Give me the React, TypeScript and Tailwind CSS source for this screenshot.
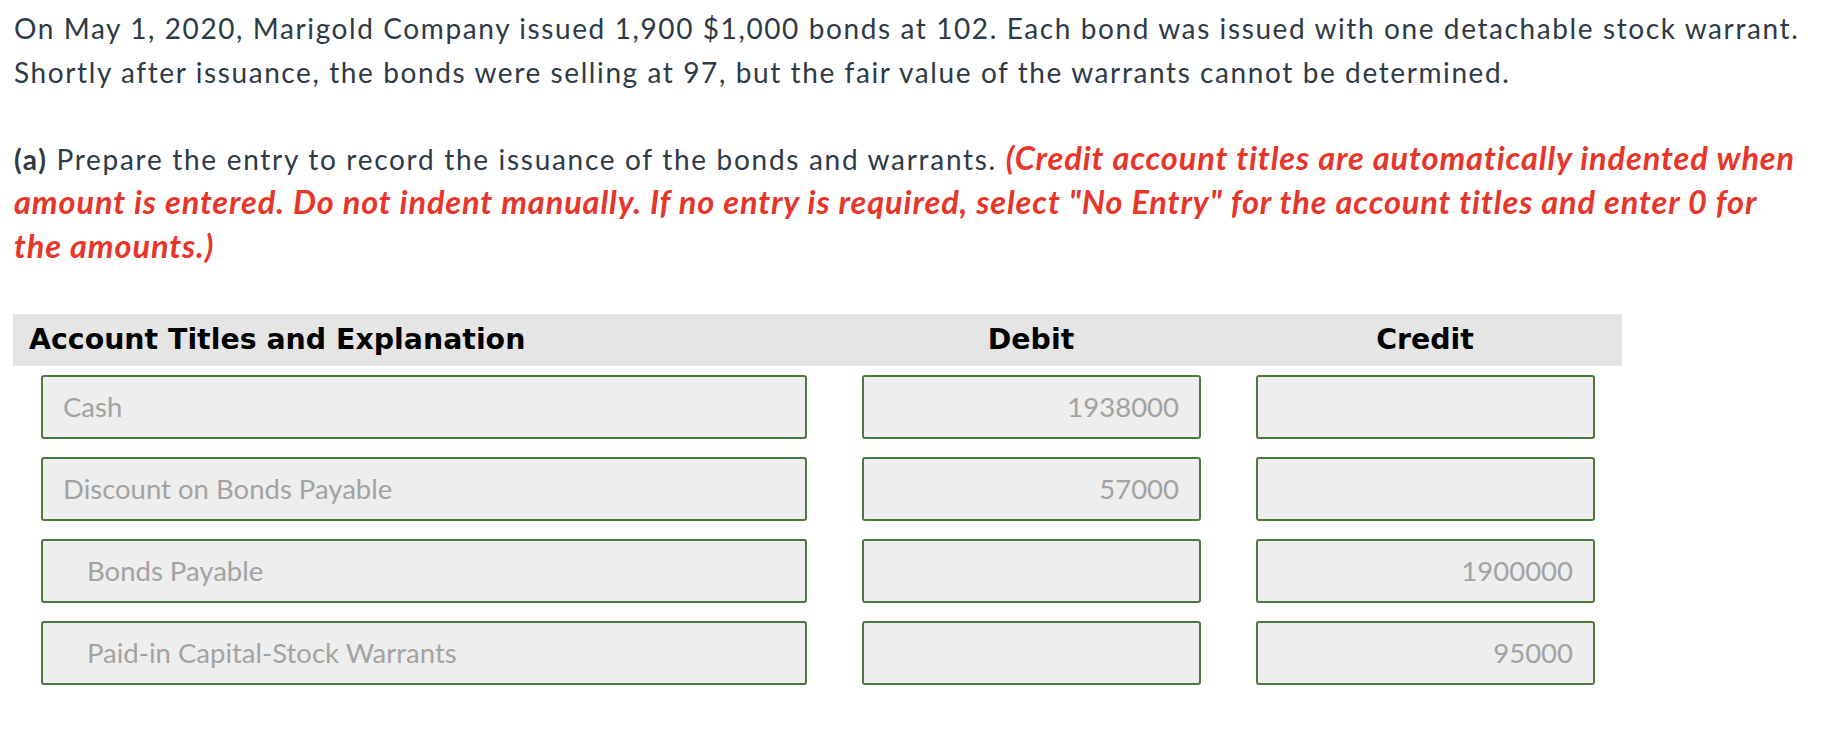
const rows = [
  { title: "Cash", indent: false, debit: "1938000", credit: "" },
  { title: "Discount on Bonds Payable", indent: false, debit: "57000", credit: "" },
  { title: "Bonds Payable", indent: true, debit: "", credit: "1900000" },
  { title: "Paid-in Capital-Stock Warrants", indent: true, debit: "", credit: "95000" },
]

function Field({ value, right, indent }: { value: string; right?: boolean; indent?: boolean }) {
  return (
    <div
      className={`h-[64px] flex items-center rounded-[3px] border-2 border-[#4b7a3d] bg-[#eeeeee] text-[27.5px] text-[#a3a3a3] ${
        right ? "justify-end pr-[20px]" : indent ? "pl-[44px]" : "pl-[20px]"
      }`}
    >
      {value}
    </div>
  )
}

export default function App() {
  return (
    <div className="min-h-screen bg-white font-['Lato','Open_Sans',sans-serif] text-[28px] leading-[44px] text-[#2e3a46] pl-[14px] pt-[6px]">
      <p className="tracking-[1.6px]">
        On May 1, 2020, Marigold Company issued 1,900 $1,000 bonds at 102. Each bond was issued with one detachable stock warrant.
        Shortly after issuance, the bonds were selling at 97, but the fair value of the warrants cannot be determined.
      </p>

      <p className="mt-[43px] pr-[28px] tracking-[1.7px]">
        <span className="font-bold">(a)</span> Prepare the entry to record the issuance of the bonds and warrants.{" "}
        <span className="font-bold italic text-[32.5px] leading-[37px] tracking-[0.9px] text-[#e8352a]">
          (Credit account titles are automatically indented when amount is entered. Do not indent manually. If no entry is
          required, select "No Entry" for the account titles and enter 0 for the amounts.)
        </span>
      </p>

      <div className="mt-[45px] w-[1609px] -ml-[1px]">
        <div className="grid grid-cols-[821px_394px_394px] h-[52px] items-center bg-[#e5e5e5] font-['DejaVu_Sans',sans-serif] font-bold text-[28.4px] text-black leading-[52px]">
          <div className="pl-[16px]">Account Titles and Explanation</div>
          <div className="text-center">Debit</div>
          <div className="text-center">Credit</div>
        </div>
        {rows.map((r) => (
          <div key={r.title} className="grid grid-cols-[821px_394px_394px] leading-[32px]">
            <div className="py-[9px] pl-[28px] pr-[27px]">
              <Field value={r.title} indent={r.indent} />
            </div>
            <div className="py-[9px] pl-[28px] pr-[27px]">
              <Field value={r.debit} right />
            </div>
            <div className="py-[9px] pl-[28px] pr-[27px]">
              <Field value={r.credit} right />
            </div>
          </div>
        ))}
      </div>
    </div>
  )
}
